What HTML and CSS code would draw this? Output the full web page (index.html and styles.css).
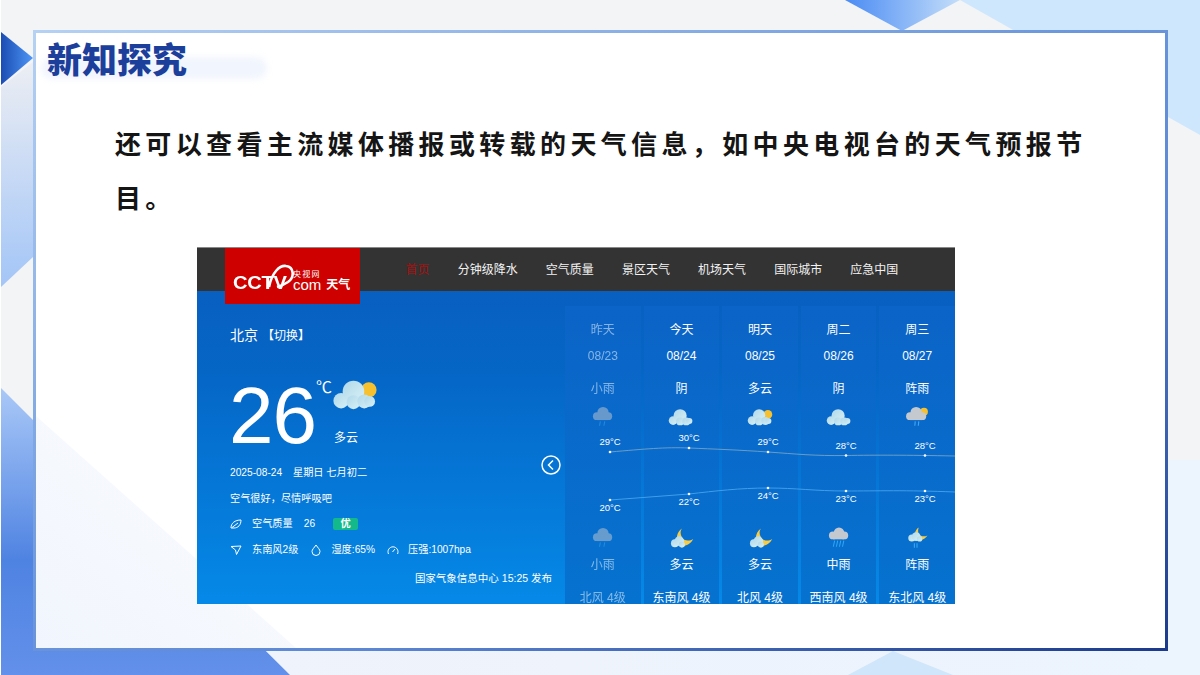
FILE: index.html
```html
<!DOCTYPE html>
<html lang="zh-CN">
<head>
    <meta charset="UTF-8">
    <meta name="viewport" content="width=device-width, initial-scale=1.0">
    <link rel="stylesheet" href="styles.css">
</head>

<body>
    <svg width="0" height="0" class="icon-defs">
        <defs>
            <linearGradient id="cloudFill" x1="0" y1="0" x2="1" y2="1">
                <stop offset="0" stop-color="#b0d8ea"/>
                <stop offset="1" stop-color="#d8f1f6"/>
            </linearGradient>
        </defs>
        <symbol id="cloud" viewBox="0 0 32 24">
            <g fill="url(#cloudFill)">
                <circle cx="7" cy="16" r="5"/>
                <circle cx="15" cy="10.5" r="7.5"/>
                <circle cx="15" cy="17" r="4.5"/>
                <circle cx="22" cy="17" r="4.5"/>
                <circle cx="25.5" cy="16.5" r="3.5"/>
            </g>
        </symbol>
        <symbol id="cloud-sun" viewBox="0 0 32 24">
            <circle cx="25" cy="9" r="5" fill="#f6c02f"/>
            <g fill="url(#cloudFill)">
                <circle cx="7" cy="16" r="5"/>
                <circle cx="15" cy="10" r="7"/>
                <circle cx="15" cy="17" r="4.5"/>
                <circle cx="22" cy="16.5" r="4.5"/>
                <circle cx="25.5" cy="16.5" r="3.5"/>
            </g>
        </symbol>
        <symbol id="rain-cloud" viewBox="0 0 32 24">
            <g fill="#c4c9d0">
                <circle cx="9" cy="11" r="4.500"/>
                <circle cx="16" cy="7" r="6.500"/>
                <circle cx="22" cy="11" r="4.500"/>
                <rect x="9" y="10" width="13" height="5.500"/>
            </g>
            <path d="M13 17l-1 5M18 17l-1 5" stroke="#3aa8f5" stroke-width="1.200"/>
        </symbol>
        <symbol id="rain-heavy" viewBox="0 0 32 24">
            <g fill="#c4c9d0">
                <circle cx="9" cy="9" r="4.500"/>
                <circle cx="16" cy="6" r="6"/>
                <circle cx="22" cy="9" r="4.500"/>
                <rect x="9" y="8" width="13" height="5.500"/>
            </g>
            <path d="M11 15l-1.500 7M14.500 15l-1.500 7M18 15l-1.500 7M21.500 15l-1.500 7" stroke="#2ea6f7" stroke-width="1.200"/>
        </symbol>
        <symbol id="rain-sun" viewBox="0 0 32 24">
            <circle cx="24" cy="6" r="4.500" fill="#f6c02f"/>
            <g fill="#c4c9d0">
                <circle cx="8" cy="11" r="4.500"/>
                <circle cx="15" cy="7" r="6.500"/>
                <circle cx="22" cy="11" r="4.500"/>
                <rect x="8" y="10" width="14" height="5.500"/>
            </g>
            <path d="M14 17l-.5 5M18 17l-.5 5" stroke="#3aa8f5" stroke-width="1.300"/>
        </symbol>
        <symbol id="moon-cloud" viewBox="0 0 32 24">
            <path d="M17 1C11 5 10 13 13 18c4 5 13 3 17-5-5 3-11 2-13-2-2-4-2-7 0-10z" fill="#f6cb45"/>
            <g fill="url(#cloudFill)">
                <circle cx="9" cy="18" r="4.500"/>
                <circle cx="14" cy="15.500" r="5.500"/>
                <circle cx="17" cy="19.500" r="3.500"/>
            </g>
        </symbol>
        <symbol id="moon-rain" viewBox="0 0 32 24">
            <path d="M18 0C13 3 13 9 15 12c3 4 10 2 13-3-4 2-8 1-10-2-1-2-1-4 0-7z" fill="#f6cb45"/>
            <g fill="url(#cloudFill)">
                <circle cx="10" cy="12" r="4"/>
                <circle cx="15" cy="10.500" r="5"/>
                <circle cx="19" cy="13" r="3"/>
            </g>
            <path d="M13 18v5M16 18v5" stroke="#3aa8f5" stroke-width="1.200"/>
        </symbol>
    </svg>

    <div class="slide">
        <svg class="slide-bg" viewBox="0 0 1200 675">
            <defs>
                <linearGradient id="topTri" x1="0" y1="0" x2="1" y2="0">
                    <stop offset="0" stop-color="#4a8bf4"/>
                    <stop offset="1" stop-color="#c4def9"/>
                </linearGradient>
                <linearGradient id="leftTri" x1="0" y1="0" x2="1" y2="0">
                    <stop offset="0" stop-color="#1a4db4"/>
                    <stop offset="1" stop-color="#4e96f7"/>
                </linearGradient>
                <linearGradient id="leftStrip" x1="0" y1="0" x2="0" y2="1">
                    <stop offset="0" stop-color="#eceef3"/>
                    <stop offset="1" stop-color="#a3c5f7"/>
                </linearGradient>
                <linearGradient id="leftLow" x1="0" y1="0" x2="0" y2="1">
                    <stop offset="0" stop-color="#a9c8f7"/>
                    <stop offset=".6" stop-color="#4f83e2"/>
                    <stop offset="1" stop-color="#6290ea"/>
                </linearGradient>
                <linearGradient id="lowBand" x1="0" y1="0" x2="1" y2="0">
                    <stop offset="0" stop-color="#eff3fb"/>
                    <stop offset="1" stop-color="#ecf4fe"/>
                </linearGradient>
            </defs>
            <rect width="1200" height="675" fill="#f3f4f6"/>
            <polygon points="265,651 1168,651 1168,460 1200,460 1200,675 265,675" fill="url(#lowBand)"/>
            <polygon points="960,0 1200,0 1200,135" fill="#cfe7fd"/>
            <polygon points="845,0 960,0 902,31" fill="url(#topTri)"/>
            <polygon points="1,32 33,58 1,85" fill="url(#leftTri)"/>
            <polygon points="1,87 33,62 33,257 1,287" fill="url(#leftStrip)"/>
            <polygon points="1,388 33,420 290,675 1,675" fill="url(#leftLow)"/>
            <polygon points="893,651 953,675 848,675" fill="#cfe6fb"/>
            <rect width="1" height="675" fill="#fff"/>
        </svg>

        <div class="card">
            <div class="card-title">
                <h1>新知探究</h1>
            </div>
            <p class="lead">还可以查看主流媒体播报或转载的天气信息，如中央电视台的天气预报节目。</p>

            <div class="weather">
                <div class="weather-nav">
                    <div class="logo">
                        <svg class="logo-swoosh" viewBox="0 0 30 28">
                            <path d="M2 23C5 8 13 1 19 2c8 1 9 11 2 16-3 2-7 4-11 5" fill="none" stroke="#fff" stroke-width="2.600"/>
                        </svg>
                        <span class="logo-cctv">CCTV</span>
                        <span class="logo-com"><small>央视网</small>com</span>
                        <span class="logo-tq">天气</span>
                    </div>
                    <a class="nav-item active">首页</a>
                    <a class="nav-item">分钟级降水</a>
                    <a class="nav-item">空气质量</a>
                    <a class="nav-item">景区天气</a>
                    <a class="nav-item">机场天气</a>
                    <a class="nav-item">国际城市</a>
                    <a class="nav-item">应急中国</a>
                </div>

                <div class="weather-body">
                    <div class="now-panel">
                        <div class="now-city">北京 <span>【切换】</span></div>
                        <div class="now-main">
                            <span class="now-temp">26</span>
                            <span class="now-unit">℃</span>
                            <div class="now-cond">
                                <svg class="now-icon"><use href="#cloud-sun"/></svg>
                                <span>多云</span>
                            </div>
                        </div>
                        <div class="now-date">2025-08-24 <span>星期日 七月初二</span></div>
                        <div class="now-row">空气很好，尽情呼吸吧</div>
                        <div class="now-row">
                            <svg class="row-icon" viewBox="0 0 12 12"><path d="M1 10C1 5 5 2 11 2c0 5-3 8-7 8-1 0-2 0-3 0zM2 9.500L8 5" fill="none" stroke="#fff" stroke-width="1"/></svg>
                            <span>空气质量</span>
                            <span class="aqi-num">26</span>
                            <span class="aqi-badge">优</span>
                        </div>
                        <div class="now-row">
                            <svg class="row-icon" viewBox="0 0 12 12"><path d="M1 2.500L11 2 6.500 10.500 5.500 6z" fill="none" stroke="#fff" stroke-width="1"/></svg>
                            <span>东南风2级</span>
                            <svg class="row-icon gap" viewBox="0 0 12 12"><path d="M6 1C4 4 2 5.500 2 7.500a4 4 0 0 0 8 0C10 5.500 8 4 6 1z" fill="none" stroke="#fff" stroke-width="1"/></svg>
                            <span>湿度:65%</span>
                            <svg class="row-icon gap" viewBox="0 0 12 12"><path d="M1.500 10a5 5 0 1 1 9 0M5.500 8L8 5" fill="none" stroke="#fff" stroke-width="1"/></svg>
                            <span>压强:1007hpa</span>
                        </div>
                        <div class="now-source">国家气象信息中心 15:25 发布</div>
                    </div>

                    <div class="forecast">
                        <div class="day past">
                            <div class="day-top">
                                <div class="day-name">昨天</div>
                                <div class="day-date">08/23</div>
                                <div class="day-weather">小雨</div>
                                <svg class="day-icon"><use href="#rain-cloud"/></svg>
                            </div>
                            <div class="day-low">
                                <svg class="day-icon"><use href="#rain-cloud"/></svg>
                                <div class="day-weather">小雨</div>
                                <div class="day-wind">北风 4级</div>
                            </div>
                        </div>
                        <div class="day">
                            <div class="day-top">
                                <div class="day-name">今天</div>
                                <div class="day-date">08/24</div>
                                <div class="day-weather">阴</div>
                                <svg class="day-icon"><use href="#cloud"/></svg>
                            </div>
                            <div class="day-low">
                                <svg class="day-icon"><use href="#moon-cloud"/></svg>
                                <div class="day-weather">多云</div>
                                <div class="day-wind">东南风 4级</div>
                            </div>
                        </div>
                        <div class="day">
                            <div class="day-top">
                                <div class="day-name">明天</div>
                                <div class="day-date">08/25</div>
                                <div class="day-weather">多云</div>
                                <svg class="day-icon"><use href="#cloud-sun"/></svg>
                            </div>
                            <div class="day-low">
                                <svg class="day-icon"><use href="#moon-cloud"/></svg>
                                <div class="day-weather">多云</div>
                                <div class="day-wind">北风 4级</div>
                            </div>
                        </div>
                        <div class="day">
                            <div class="day-top">
                                <div class="day-name">周二</div>
                                <div class="day-date">08/26</div>
                                <div class="day-weather">阴</div>
                                <svg class="day-icon"><use href="#cloud"/></svg>
                            </div>
                            <div class="day-low">
                                <svg class="day-icon"><use href="#rain-heavy"/></svg>
                                <div class="day-weather">中雨</div>
                                <div class="day-wind">西南风 4级</div>
                            </div>
                        </div>
                        <div class="day">
                            <div class="day-top">
                                <div class="day-name">周三</div>
                                <div class="day-date">08/27</div>
                                <div class="day-weather">阵雨</div>
                                <svg class="day-icon"><use href="#rain-sun"/></svg>
                            </div>
                            <div class="day-low">
                                <svg class="day-icon"><use href="#moon-rain"/></svg>
                                <div class="day-weather">阵雨</div>
                                <div class="day-wind">东北风 4级</div>
                            </div>
                        </div>

                        <!-- temperature curves lie over the day columns -->
                        <svg class="temp-chart" viewBox="0 0 390 313">
                            <path class="line-high" d="M45 161C80 158 100 156 124 157S175 159 203 161 250 165 281 164.500 340 164 390 165"/>
                            <path class="line-low" d="M45 209L124 203C150 200 175 197 203 197S250 200 281 200 340 199 390 201"/>
                            <g class="dots">
                                <circle cx="45" cy="161" r="1.300"/><circle cx="124" cy="157" r="1.300"/><circle cx="203" cy="161" r="1.300"/><circle cx="281" cy="164.500" r="1.300"/><circle cx="360" cy="164.500" r="1.300"/>
                                <circle cx="45" cy="209" r="1.300"/><circle cx="124" cy="203" r="1.300"/><circle cx="203" cy="197" r="1.300"/><circle cx="281" cy="200" r="1.300"/><circle cx="360" cy="200" r="1.300"/>
                            </g>
                            <g class="temps">
                                <text x="45" y="153.500">29°C</text><text x="124" y="149.500">30°C</text><text x="203" y="153.500">29°C</text><text x="281" y="157.500">28°C</text><text x="360" y="157.500">28°C</text>
                                <text x="45" y="220">20°C</text><text x="124" y="214">22°C</text><text x="203" y="208">24°C</text><text x="281" y="211">23°C</text><text x="360" y="211">23°C</text>
                            </g>
                        </svg>
                    </div>

                    <svg class="back-arrow" viewBox="0 0 20 20"><circle cx="10" cy="10" r="9" fill="none" stroke="#fff" stroke-width="1.500"/><path d="M12 5.500L7.500 10l4.500 4.500" fill="none" stroke="#fff" stroke-width="1.500"/></svg>
                </div>
            </div>
        </div>
    </div>
</body>
</html>
```

FILE: styles.css
```css
body {
    margin: 0;
    padding: 0;
    font-family: "Liberation Sans", "Noto Sans CJK SC", sans-serif;
}

.icon-defs {
    position: absolute;
}

.slide {
    position: relative;
    width: 1200px;
    height: 675px;
    overflow: hidden;
    padding-top: 30px;
    box-sizing: border-box;
}

.slide-bg {
    position: absolute;
    left: 0;
    top: 0;
    width: 1200px;
    height: 675px;
}

.card {
    position: relative;
    width: 1135px;
    height: 621px;
    margin-left: 33px;
    box-sizing: border-box;
    border: 3px solid;
    border-image: linear-gradient(to bottom right, #b5d1f3, #6d98dc 45%, #5b86d4 65%, #1b3a8c) 1;
    background: #fff;
}

/* faint diagonal on the lower left of the card */
.card::before {
    content: "";
    position: absolute;
    left: 0;
    bottom: 0;
    width: 260px;
    height: 232px;
    clip-path: polygon(0 0, 100% 100%, 0 100%);
    background: linear-gradient(to top right, #f1f5fd, #fbfcfe);
}

.card-title {
    position: relative;
    height: 49px;
    padding-left: 11px;
}

.card-title::after {
    content: "";
    position: absolute;
    left: 5px;
    top: 24px;
    width: 226px;
    height: 22px;
    border-radius: 11px;
    background: #f1f5fd;
    filter: blur(3px);
}

.card-title h1 {
    position: relative;
    z-index: 1;
    margin: 0;
    font-family: "Noto Sans CJK SC", sans-serif;
    font-size: 35px;
    font-weight: 900;
    line-height: 50px;
    color: #1c3f9c;
}

.lead {
    position: relative;
    width: 990px;
    margin: 34px 0 0 79px;
    font-family: "Noto Sans CJK SC", sans-serif;
    font-size: 26px;
    font-weight: 700;
    letter-spacing: 4.360px;
    line-height: 54px;
    color: #151515;
}

.weather {
    position: relative;
    width: 758px;
    height: 357px;
    margin: 23px 0 0 161px;
    color: #fff;
    background: linear-gradient(#0a5cbe, #0566c6 35%, #0589e8);
}

.weather-nav {
    display: flex;
    align-items: flex-start;
    height: 44px;
    background: #333;
    border-top: 1px solid #888;
    box-sizing: border-box;
}

.logo {
    position: relative;
    z-index: 2;
    display: flex;
    align-items: flex-end;
    width: 135px;
    height: 56px;
    margin-left: 28px;
    padding: 0 0 13px 8px;
    box-sizing: border-box;
    background: #cf0000;
}

.logo-swoosh {
    position: absolute;
    left: 42px;
    top: 16px;
    width: 30px;
    height: 28px;
}

.logo-cctv {
    width: 53.500px;
    margin-right: 6.500px;
    font-size: 18px;
    font-weight: bold;
    line-height: 15px;
    letter-spacing: -.3px;
    transform: scaleX(1.120);
    transform-origin: left;
}

.logo-com {
    display: flex;
    flex-direction: column;
    font-size: 15px;
    line-height: 12px;
}

.logo-com small {
    font-size: 8px;
    line-height: 9px;
    letter-spacing: 1.300px;
}

.logo-tq {
    margin-left: 5px;
    font-size: 12px;
    font-weight: bold;
    line-height: 12px;
}

.nav-item {
    margin-left: 28.100px;
    font-size: 12px;
    line-height: 45px;
    color: #f2f2f2;
}

.nav-item.active {
    margin-left: 45.600px;
    color: #a31212;
}

.weather-body {
    position: relative;
    display: grid;
    grid-template-columns: 368px 390px;
    height: 313px;
}

.now-panel {
    padding: 35px 13px 0 33px;
    font-size: 10.200px;
}

.now-city {
    font-size: 14px;
    line-height: 18px;
}

.now-city span {
    font-size: 12px;
}

.now-main {
    display: flex;
    height: 58px;
    margin-top: 42px;
}

.now-temp {
    margin-left: -1px;
    font-size: 80px;
    line-height: 58px;
    letter-spacing: -1px;
}

.now-unit {
    margin-top: -9px;
    font-size: 16px;
    line-height: 20px;
}

.now-cond {
    display: flex;
    flex-direction: column;
    margin: -11px 0 0 -2px;
    font-size: 12px;
}

.now-icon {
    width: 50px;
    height: 37px;
    margin-bottom: 15px;
}

.now-cond span {
    margin-left: 4px;
}

.now-date {
    margin-top: 21px;
    line-height: 14px;
}

.now-date span {
    margin-left: 8px;
}

.now-row {
    display: flex;
    align-items: center;
    margin-top: 11.500px;
    line-height: 14px;
}

.row-icon {
    width: 12px;
    height: 12px;
    margin-right: 10px;
    flex-shrink: 0;
}

.row-icon.gap {
    margin: 0 9px 0 12px;
}

.aqi-num {
    margin-left: 11px;
}

.aqi-badge {
    width: 25px;
    height: 12px;
    margin-left: 18px;
    border-radius: 2px;
    background: #13b98a;
    font-weight: bold;
    line-height: 12px;
    text-align: center;
}

.now-source {
    margin-top: 14px;
    font-size: 10.500px;
    line-height: 14px;
    text-align: right;
}

.forecast {
    position: relative;
    display: grid;
    grid-template-columns: repeat(5, 1fr);
    gap: 3px;
    padding-top: 15px;
    box-sizing: border-box;
    height: 313px;
}

.day {
    display: flex;
    flex-direction: column;
    justify-content: space-between;
    align-items: center;
    background: linear-gradient(#0b64c7, #0672cf);
    text-align: center;
    overflow: hidden;
    font-size: 12px;
}

.day.past > * {
    opacity: .5;
}

.day-top,
.day-low {
    display: flex;
    flex-direction: column;
    align-items: center;
}

.day-name {
    margin-top: 15px;
    line-height: 18px;
}

.day-date {
    margin-top: 8px;
    line-height: 18px;
}

.day-top .day-weather {
    margin-top: 15px;
    line-height: 18px;
}

.day-icon {
    width: 28px;
    height: 24px;
    margin-top: 7px;
}

.day-low .day-icon {
    margin-top: 0;
}

.day-low .day-weather {
    margin-top: 6px;
    line-height: 18px;
}

.day-wind {
    margin: 17px 0 -1px;
    line-height: 14px;
    white-space: nowrap;
}

.temp-chart {
    position: absolute;
    left: 0;
    top: 0;
    width: 390px;
    height: 313px;
}

.line-high,
.line-low {
    fill: none;
    stroke-width: 1;
}

.line-high {
    stroke: #7fa9c9;
    opacity: .8;
}

.line-low {
    stroke: #3f9fea;
}

.dots {
    fill: #fff;
}

.temps text {
    fill: #fff;
    font-size: 9.500px;
    text-anchor: middle;
}

.back-arrow {
    position: absolute;
    left: 344px;
    top: 164px;
    width: 20px;
    height: 20px;
}
```
